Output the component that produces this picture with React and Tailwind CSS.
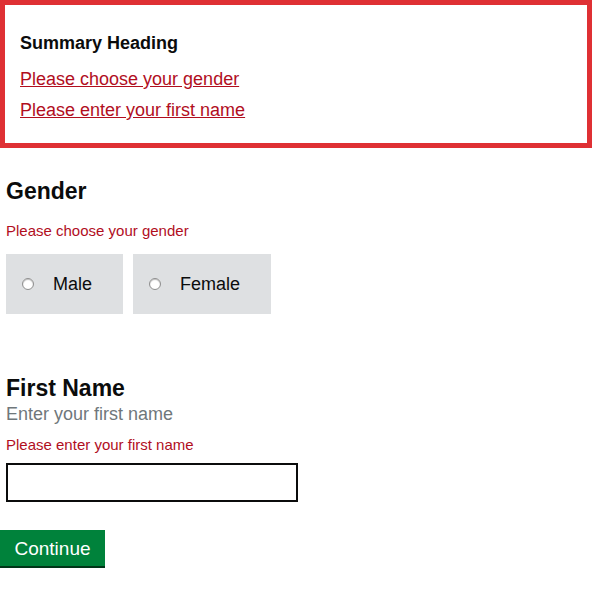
import React, { useState } from "react";

//RadioOption function
const RadioOption = ({ label, value, checked, onChange }) => {
  return (
    <label className="flex items-center h-[60px] bg-[#dee0e2] pl-[16px] pr-[31px] cursor-pointer">
      <input
        type="radio"
        name="gender"
        value={value}
        checked={checked}
        onChange={onChange}
        className="appearance-none w-[12px] h-[12px] rounded-full bg-white border border-[#8e8e8e] shadow-[inset_0_1px_1px_rgba(0,0,0,0.25)] m-0"
      />
      <span className="ml-[19px] text-[18px] leading-[25px] text-[#0b0c0c]">{label}</span>
    </label>
  );
};

//App function
const App = () => {
  const [gender, setGender] = useState("");
  const [firstName, setFirstName] = useState("");

  //handleSubmit function
  const handleSubmit = (e) => {
    e.preventDefault();
  };

  return (
    <div className="w-[592px] min-h-[616px] bg-white text-[#0b0c0c] font-['Liberation_Sans',Arial,sans-serif]">
      <div className="h-[148px] border-[5px] border-[#df3034] pl-[15px] pt-[26px]">
        <h2 className="text-[18px] leading-[25px] font-bold">Summary Heading</h2>
        <ul className="mt-[8px]">
          <li className="leading-[30px]">
            <a href="#gender" className="text-[18px] text-[#b10e1e] underline">
              Please choose your gender
            </a>
          </li>
          <li className="leading-[30px]">
            <a href="#first-name" className="text-[18px] text-[#b10e1e] underline">
              Please enter your first name
            </a>
          </li>
        </ul>
      </div>

      <form onSubmit={handleSubmit}>
        <div id="gender" className="px-[6px] pt-[28px]">
          <h1 className="text-[23px] leading-[30px] font-bold">Gender</h1>
          <p className="mt-[15px] text-[15px] leading-[20px] text-[#b10e1e]">Please choose your gender</p>
          <div className="flex gap-[10px] mt-[13px]">
            <RadioOption label="Male" value="male" checked={gender === "male"} onChange={() => setGender("male")} />
            <RadioOption label="Female" value="female" checked={gender === "female"} onChange={() => setGender("female")} />
          </div>
        </div>

        <div id="first-name" className="px-[6px] pt-[62px]">
          <h1 className="text-[23px] leading-[24px] font-bold">First Name</h1>
          <p className="mt-[2px] text-[18px] leading-[24px] text-[#6f777b]">Enter your first name</p>
          <p className="mt-[9px] text-[15px] leading-[20px] text-[#b10e1e]">Please enter your first name</p>
          <input
            type="text"
            value={firstName}
            onChange={(e) => setFirstName(e.target.value)}
            className="block mt-[8px] w-[292px] h-[39px] border-2 border-[#0b0c0c] px-[6px] text-[18px] outline-none"
          />
        </div>

        <button
          type="submit"
          className="mt-[28px] w-[105px] h-[36px] bg-[#00823b] text-white text-[19px] leading-[38px] shadow-[0_2px_0_#003618] text-center"
        >
          Continue
        </button>
      </form>
    </div>
  );
};

export default App;
